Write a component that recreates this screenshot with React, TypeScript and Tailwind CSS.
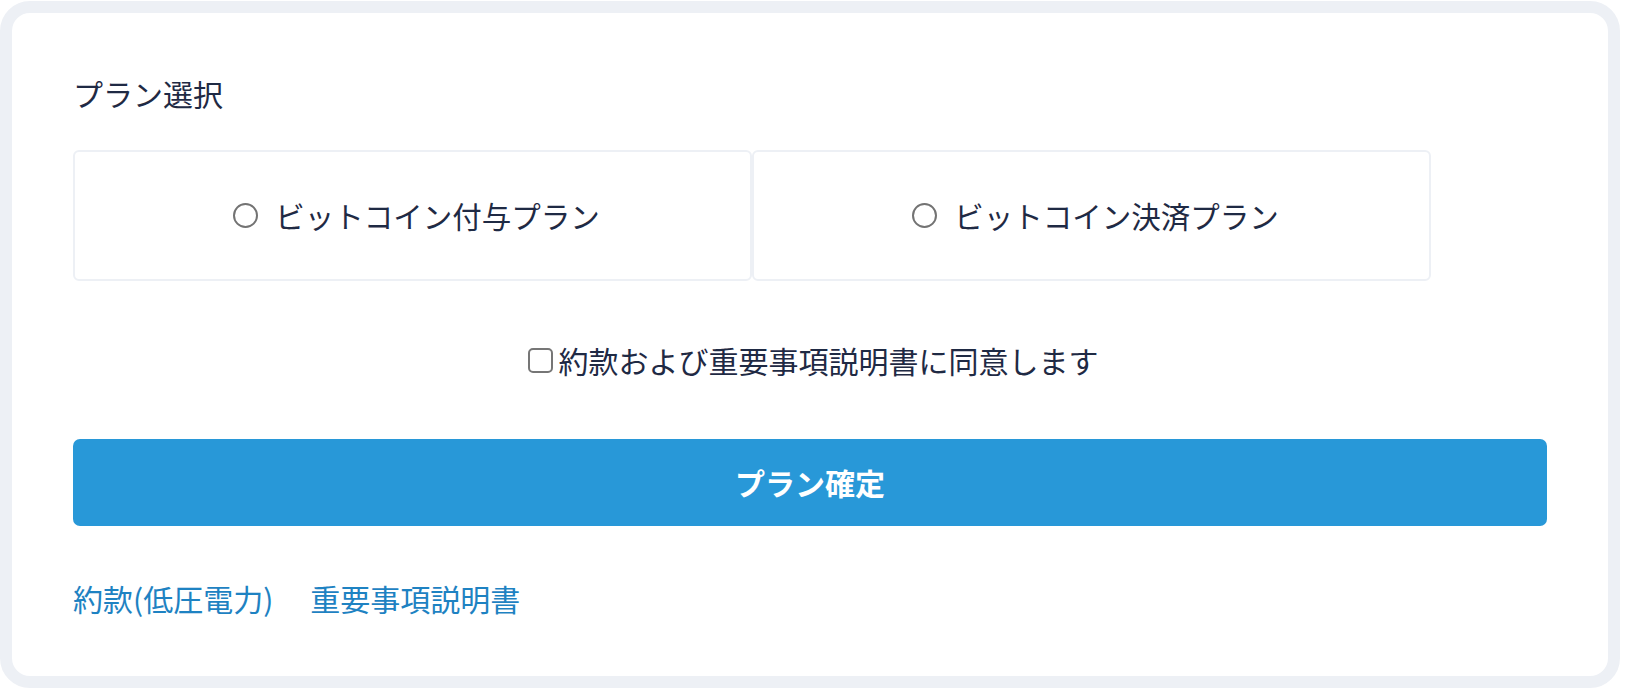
import React from "react";

export default function App() {
  const font = { fontFamily: '"Noto Sans CJK JP", "Noto Sans", sans-serif' };
  return (
    <div className="bg-white w-[1626px] h-[692px] pt-px" style={font}>
      <div className="w-[1620px] h-[687px] border-[12px] border-[#edf0f5] rounded-[30px] bg-white px-[61px] pt-[59px] flex flex-col text-[#1f2a44]">
        <div className="text-[30px] leading-[43px]">プラン選択</div>
        <div className="mt-[35px] flex">
          {["ビットコイン付与プラン", "ビットコイン決済プラン"].map((t) => (
            <div
              key={t}
              className="w-[679px] h-[131px] border-2 border-[#edf0f5] rounded-[6px] flex items-center justify-center pl-[8px]"
            >
              <span className="w-[25px] h-[25px] rounded-full border-2 border-[#737373] bg-white shrink-0" />
              <span className="ml-[17px] text-[29.5px] leading-[43px]">{t}</span>
            </div>
          ))}
        </div>
        <div className="mt-[58px] flex items-center justify-center pl-[6px]">
          <span className="w-[25px] h-[25px] rounded-[5px] border-2 border-[#767676] bg-white shrink-0" />
          <span className="ml-[6px] text-[30px] leading-[43px]">約款および重要事項説明書に同意します</span>
        </div>
        <button className="mt-[57px] h-[87px] w-full rounded-[7px] bg-[#2898d8] text-white text-[30px] font-bold flex items-center justify-center">
          プラン確定
        </button>
        <div className="mt-[51px] flex items-center gap-[37px] text-[30px] leading-[43px] text-[#1e82c2]">
          <span>約款(低圧電力)</span>
          <span>重要事項説明書</span>
        </div>
      </div>
    </div>
  );
}
